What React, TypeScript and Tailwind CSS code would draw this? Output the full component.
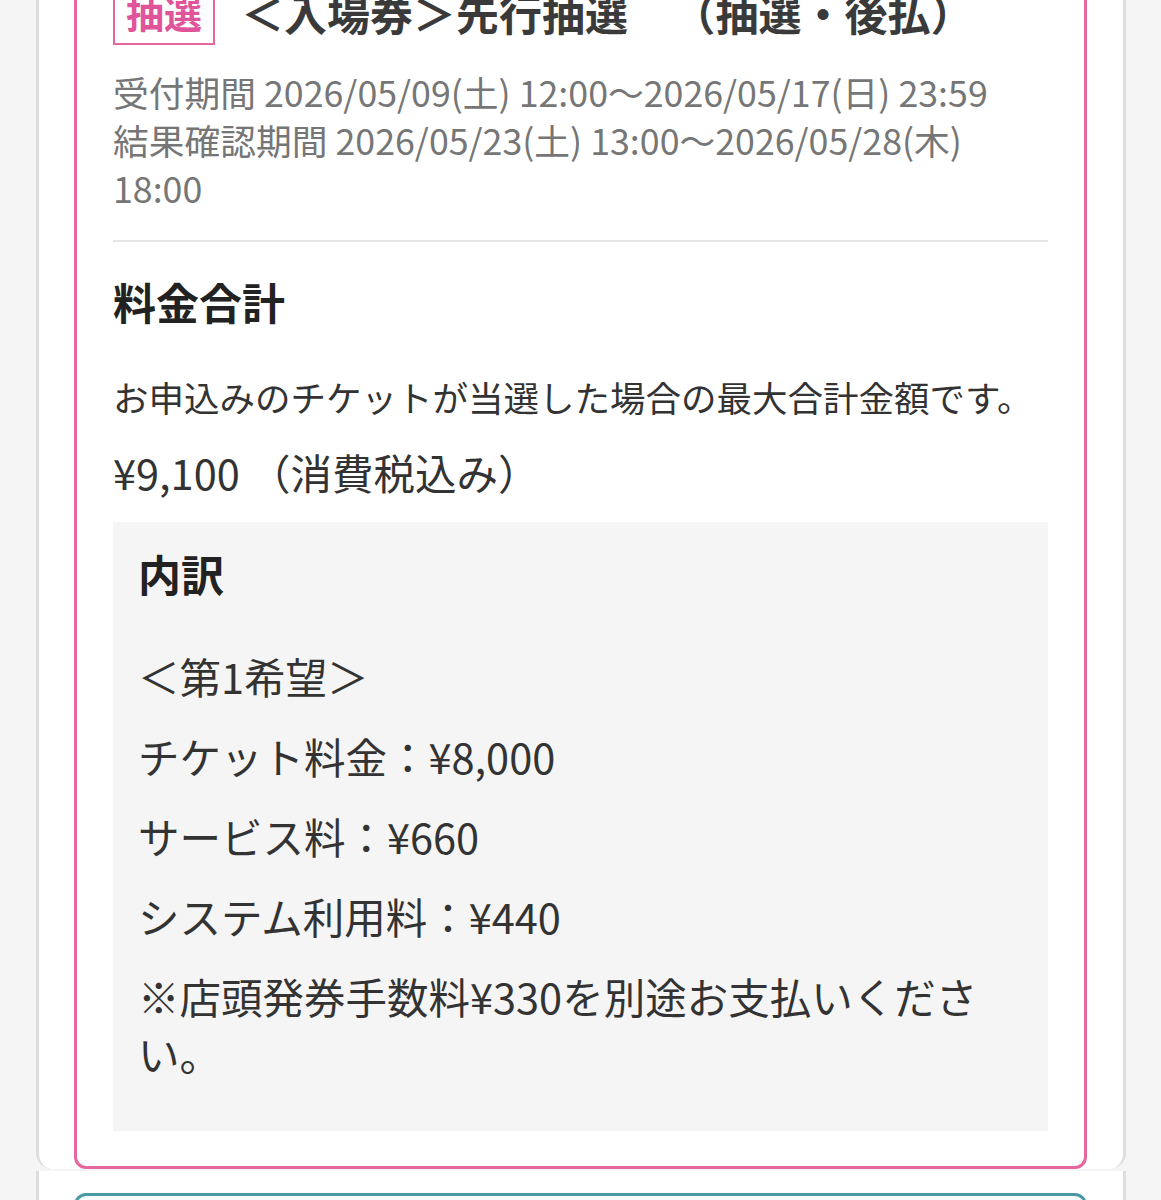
export default function App() {
  const items = [
    "チケット料金：¥8,000",
    "サービス料：¥660",
    "システム利用料：¥440",
    "※店頭発券手数料¥330を別途お支払いください。",
  ];
  return (
    <div className="h-[1200px] overflow-hidden bg-[#f5f5f5] [font-family:'Noto_Sans_CJK_JP','Noto_Sans',sans-serif]">
      <div className="ml-[36px] mr-[35px]">
        <div className="-mt-[80px] bg-white border-x-[3px] border-[#dedede] rounded-b-[16px] pt-[22px] pl-[35px] pr-[36px]">
          <div className="border-[3px] border-[#e5679f] rounded-[12px] pt-[33px] pb-[35px] px-[36px]">
            <div className="flex items-center gap-[26px]">
              <div className="border-[2.5px] border-[#e5679f] bg-white px-[11px] py-[9.5px] text-[38px] leading-[44px] font-bold text-[#e0559a]">
                抽選
              </div>
              <div className="text-[43px] leading-[52px] font-bold text-[#3a3a3a] whitespace-nowrap">
                ＜入場券＞先行抽選　<span className="ml-[23px]">（抽選・後払）</span>
              </div>
            </div>
            <div className="mt-[23px] text-[35.75px] leading-[48px] text-[#767676]">
              <div>受付期間 2026/05/09(土) 12:00～2026/05/17(日) 23:59</div>
              <div>結果確認期間 2026/05/23(土) 13:00～2026/05/28(木) 18:00</div>
            </div>
            <div className="mt-[28px] h-[2px] bg-[#e6e6e6]" />
            <div className="mt-[29px] text-[43px] leading-[60px] font-bold text-[#222]">料金合計</div>
            <div className="mt-[42px] text-[35.5px] leading-[48px] text-[#333]">
              お申込みのチケットが当選した場合の最大合計金額です。
            </div>
            <div className="mt-[27px] text-[41.5px] leading-[48px] text-[#333]">¥9,100 （消費税込み）</div>
            <div className="mt-[26px] bg-[#f5f5f5] px-[25px] pt-[21px] pb-[49px]">
              <div className="text-[43px] leading-[60px] font-bold text-[#222]">内訳</div>
              <div className="mt-[45px] text-[41.5px] leading-[57px] text-[#333]">＜第1希望＞</div>
              {items.map((t) => (
                <div key={t} className="mt-[23px] text-[41.5px] leading-[57px] text-[#333]">
                  {t}
                </div>
              ))}
            </div>
          </div>
        </div>
        <div className="mt-[2px] bg-white border-x-[3px] border-[#dedede] pt-[22px] pl-[35px] pr-[36px] h-[200px]">
          <div className="border-[3px] border-[#4a9aa3] rounded-[12px] bg-[#f6fbfb] h-[160px]" />
        </div>
      </div>
    </div>
  );
}
